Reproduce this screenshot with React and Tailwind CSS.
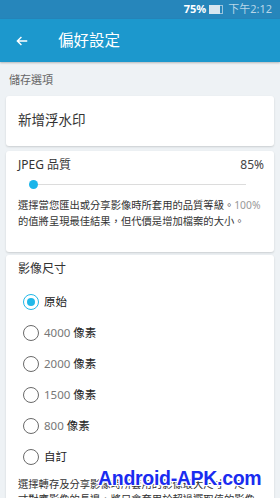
import React from 'react'

const FONT = { fontFamily: '"Noto Sans", "Noto Sans CJK TC", sans-serif' }

const SIZES = [
  { num: null, label: '原始' },
  { num: '4000', label: '像素' },
  { num: '2000', label: '像素' },
  { num: '1500', label: '像素' },
  { num: '800', label: '像素' },
  { num: null, label: '自訂' },
]

function Radio({ checked }) {
  return (
    <span
      className={`flex h-[16px] w-[16px] shrink-0 items-center justify-center rounded-full border-[1.5px] ${
        checked ? 'border-[#20b8e8]' : 'border-[#6a6a6a]'
      }`}
    >
      {checked && <span className="h-[8px] w-[8px] rounded-full bg-[#20b8e8]" />}
    </span>
  )
}

export default function App() {
  return (
    <div className="relative h-[498px] w-[280px] overflow-hidden bg-[#eef2f5]" style={FONT}>
      {/* status bar */}
      <div className="flex h-[19px] items-center justify-end gap-[3px] bg-[#2686bb] pr-[8px] text-[11px]">
        <span className="font-bold text-white">75%</span>
        <span className="flex items-center">
          <span className="h-[9px] w-[11px] bg-[#d8e6ef]" />
          <span className="h-[9px] w-[3px] border border-l-0 border-[#9cc4dc]" />
        </span>
        <span className="ml-[2px] text-[#b8d6e8]">下午2:12</span>
      </div>

      {/* app bar */}
      <div className="flex h-[43px] items-center bg-[#1c98cd] shadow-[0_1px_2px_rgba(0,0,0,0.25)]">
        <svg className="ml-[15px]" width="14" height="14" viewBox="0 0 24 24" fill="none" stroke="white" strokeWidth="2.4">
          <path d="M21 12H4M11 5l-7 7 7 7" />
        </svg>
        <span className="ml-[29px] text-[15.5px] text-white">偏好設定</span>
      </div>

      <div className="px-[6px]">
        <div className="pb-[7px] pl-[3px] pt-[10px] text-[11px] text-[#666]">儲存選項</div>

        <div className="flex h-[50px] items-center rounded-[3px] bg-white pl-[12px] text-[13.5px] text-[#333] shadow-[0_1px_2px_rgba(0,0,0,0.15)]">
          新增浮水印
        </div>

        <div className="mt-[5px] h-[101px] rounded-[3px] bg-white px-[12px] pt-[5px] shadow-[0_1px_2px_rgba(0,0,0,0.15)]">
          <div className="flex items-center justify-between text-[12px] text-[#333]">
            <span>JPEG 品質</span>
            <span className="mr-[-2px] text-[#444]">85%</span>
          </div>
          <div className="relative mx-[16px] mt-[6px] flex h-[10px] items-center">
            <div className="h-[1.5px] w-full bg-[#dcdcdc]" />
            <div className="absolute left-[-5px] h-[9px] w-[9px] rounded-full bg-[#1bb5ea]" />
          </div>
          <div className="mt-[7px] whitespace-nowrap text-[10.3px] leading-[16px] text-[#333]">
            <div>
              選擇當您匯出或分享影像時所套用的品質等級。<span className="text-[#999]">100%</span>
            </div>
            <div>的值將呈現最佳結果，但代價是增加檔案的大小。</div>
          </div>
        </div>

        <div className="mt-[3px] rounded-[3px] bg-white px-[12px] pt-[5px] shadow-[0_1px_2px_rgba(0,0,0,0.15)]">
          <div className="text-[12px] text-[#333]">影像尺寸</div>
          <div className="mt-[9px] flex flex-col">
            {SIZES.map((s, i) => (
              <div key={i} className="flex h-[31px] items-center gap-[5px] pl-[5px]">
                <Radio checked={i === 0} />
                <span className="text-[11.5px] text-[#222]">
                  {s.num && <span className="text-[#777]">{s.num} </span>}
                  {s.label}
                </span>
              </div>
            ))}
          </div>
          <div className="mt-[4px] whitespace-nowrap text-[10.3px] leading-[15px] text-[#333]">
            <div>選擇轉存及分享影像時所套用的影像最大尺寸。尺</div>
            <div>寸對應影像的長邊，將只會套用於超過選取值的影像</div>
          </div>
        </div>
      </div>

      {/* watermark */}
      <div
        className="absolute left-[98px] top-[469px] whitespace-nowrap text-[19.5px] font-bold leading-none tracking-[-0.3px] text-[#1a2cf0]"
        style={{
          fontFamily: '"Liberation Sans", sans-serif',
          textShadow:
            '1px 0 #fff, -1px 0 #fff, 0 1px #fff, 0 -1px #fff, 1px 1px #fff, -1px -1px #fff, 1px -1px #fff, -1px 1px #fff',
        }}
      >
        Android-APK.com
      </div>
    </div>
  )
}
